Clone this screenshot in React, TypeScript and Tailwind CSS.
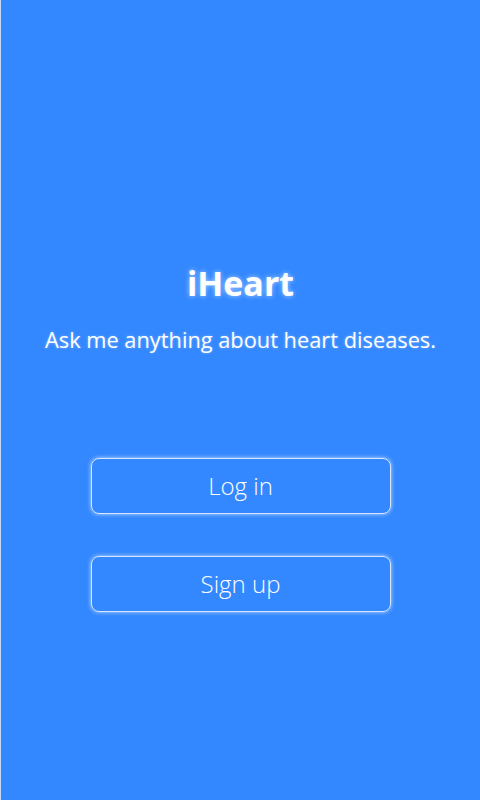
export default function App() {
    return (
        <div
            className="w-[480px] h-[800px] bg-[#3388ff] border-l border-[#c9d8f0] flex flex-col items-center text-white"
            style={{fontFamily: '"Open Sans", "Noto Sans", sans-serif'}}
        >
            <h1 className="mt-[262px] text-[34px] leading-[42px] font-bold [text-shadow:0_0_5px_rgba(255,255,255,0.6)]">
                iHeart
            </h1>
            <p className="mt-[21px] text-[21.8px] leading-[30px] [text-shadow:0_0_3px_rgba(255,255,255,0.35)]">
                Ask me anything about heart diseases.
            </p>

            <button className="mt-[103px] w-[300px] h-[56px] rounded-[8px] border border-white/80 shadow-[0_0_4px_rgba(255,255,255,0.7)] text-[24px] leading-[30px] font-light pb-[1px]">
                Log in
            </button>
            <button className="mt-[42px] w-[300px] h-[56px] rounded-[8px] border border-white/80 shadow-[0_0_4px_rgba(255,255,255,0.7)] text-[24px] leading-[30px] font-light pb-[1px]">
                Sign up
            </button>
        </div>
    );
}
